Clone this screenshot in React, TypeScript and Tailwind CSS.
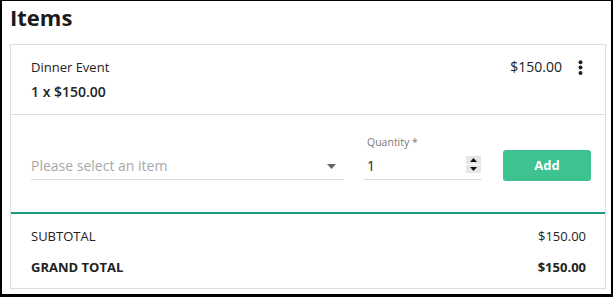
import React from "react";

function Kebab() {
  return (
    <svg width="5" height="16" viewBox="0 0 5 16" className="block">
      <circle cx="2.5" cy="2.2" r="2" fill="#222" />
      <circle cx="2.5" cy="7.6" r="2" fill="#222" />
      <circle cx="2.5" cy="13" r="2" fill="#222" />
    </svg>
  );
}

function Spinner() {
  return (
    <div className="flex flex-col gap-px w-[15px] h-[17px]">
      <div className="flex-1 bg-[#e6e6e6] flex items-center justify-center">
        <svg width="7" height="4" viewBox="0 0 7 4"><polygon points="0,4 7,4 3.5,0" fill="#111" /></svg>
      </div>
      <div className="flex-1 bg-[#e6e6e6] flex items-center justify-center">
        <svg width="7" height="4" viewBox="0 0 7 4"><polygon points="0,0 7,0 3.5,4" fill="#111" /></svg>
      </div>
    </div>
  );
}

export default function App() {
  return (
    <div className="w-[613px] h-[297px] bg-white border-black border-t border-l-2 border-r-2 border-b-[3px] font-['Open_Sans',sans-serif] text-[#222] overflow-hidden">
      <h1 className="mt-[3px] ml-[8px] text-[22px] leading-[26px] font-bold text-[#1b1b1b]">Items</h1>
      <div className="mt-[14px] ml-[8px] w-[596px] border border-[#dddddd]">
        {/* item row */}
        <div className="flex items-start justify-between pt-[13px] pb-[12px] pl-[20px] pr-[22px] border-b border-[#dddddd]">
          <div className="flex flex-col">
            <div className="text-[13px] leading-[18px]">Dinner Event</div>
            <div className="mt-[6px] text-[14px] leading-[20px] font-semibold">1 x $150.00</div>
          </div>
          <div className="flex items-center gap-[16px]">
            <div className="text-[14px] leading-[20px] mt-[-1px]">$150.00</div>
            <Kebab />
          </div>
        </div>
        {/* add row */}
        <div className="flex items-start h-[97px] pt-[20px] pl-[20px] pr-[12px]">
          <div className="w-[313px] mt-[21px] h-[24px] border-b border-[#dddddd] flex items-start">
            <div className="flex-1 text-[14px] leading-[20px] text-[#a9a9a9]">Please select an item</div>
            <div className="h-[20px] flex items-center mr-[8px]">
              <svg width="9" height="5" viewBox="0 0 9 5"><polygon points="0,0 9,0 4.5,5" fill="#666" /></svg>
            </div>
          </div>
          <div className="ml-[20px] w-[118px] flex flex-col">
            <div className="text-[10.5px] leading-[14px] text-[#7a7a7a] pl-[3px]">Quantity *</div>
            <div className="mt-[7px] h-[24px] border-b border-[#dddddd] flex items-start pl-[3px] pr-px">
              <div className="flex-1 text-[14px] leading-[20px]">1</div>
              <Spinner />
            </div>
          </div>
          <button className="ml-[21px] mt-[15px] w-[88px] h-[31px] rounded-[3px] bg-[#3ec28f] text-white text-[13px] font-bold">Add</button>
        </div>
        {/* totals */}
        <div className="border-t-2 border-[#1a9b80] pt-[13px] pb-[12px] pl-[20px] pr-[19px] flex flex-col gap-[13px]">
          <div className="flex justify-between text-[13px] leading-[18px]">
            <span>SUBTOTAL</span>
            <span>$150.00</span>
          </div>
          <div className="flex justify-between text-[13px] leading-[18px] font-bold">
            <span>GRAND TOTAL</span>
            <span>$150.00</span>
          </div>
        </div>
      </div>
    </div>
  );
}
